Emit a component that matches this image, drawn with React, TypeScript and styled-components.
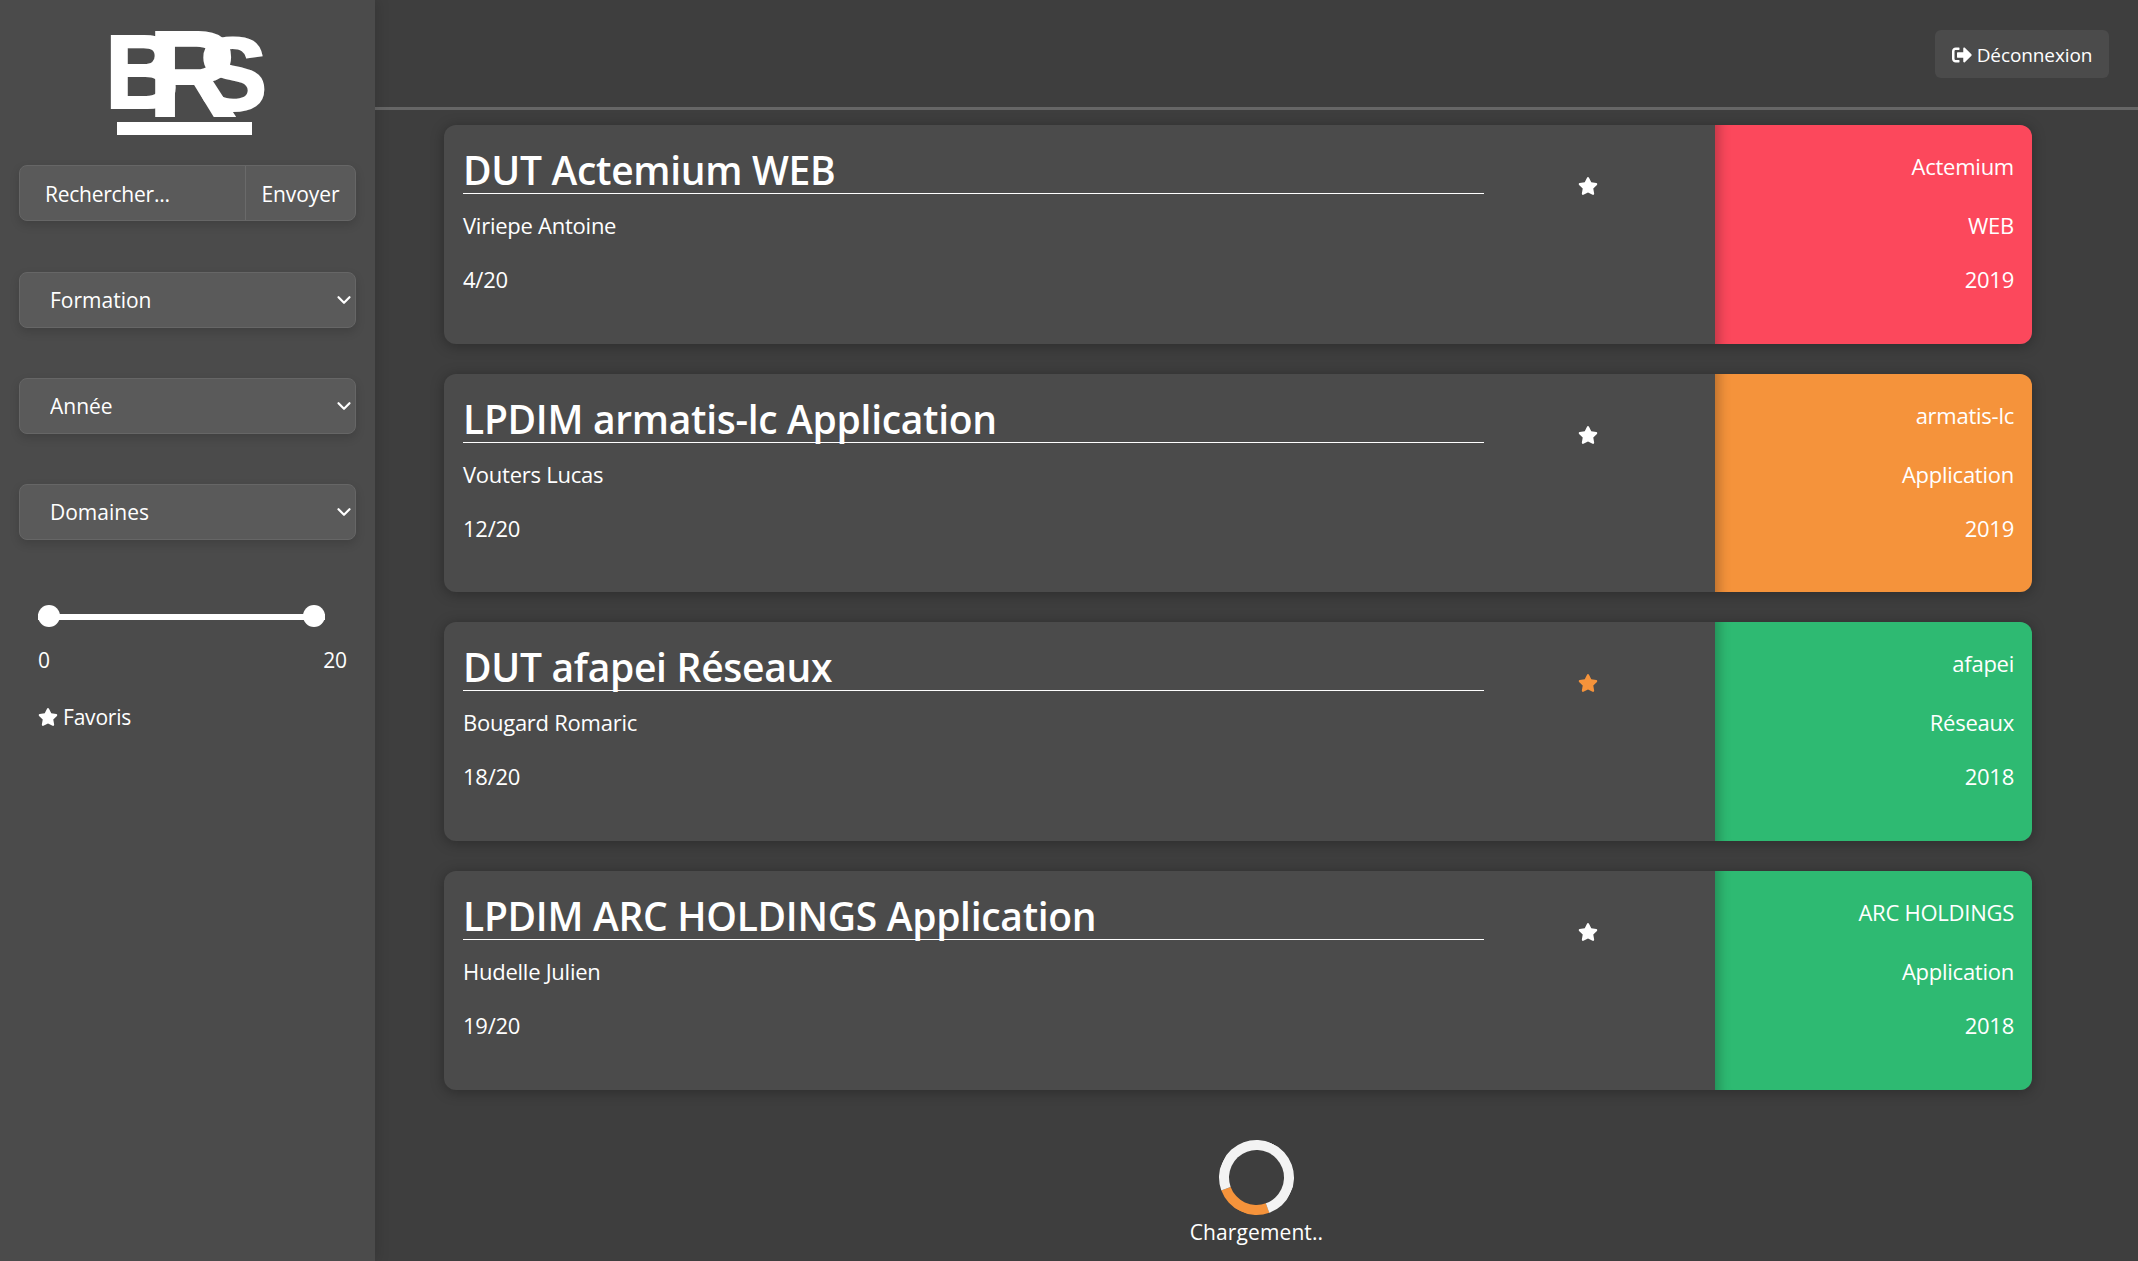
import React from 'react'
import styled, { createGlobalStyle } from 'styled-components'
import { FaStar, FaSignOutAlt } from 'react-icons/fa'
import { FiChevronDown } from 'react-icons/fi'

const GlobalStyle = createGlobalStyle`
  html, body {
    margin: 0;
    padding: 0;
    height: 100%;
    background: #3e3e3e;
    color: #fff;
    font-family: "Open Sans", "Noto Sans", "Liberation Sans", sans-serif;
    overflow: hidden;
  }
  * { box-sizing: border-box; }
`

const Page = styled.div`
  display: flex;
  height: 100vh;
  overflow: hidden;
`

const Sidebar = styled.aside`
  width: 375px;
  flex: none;
  background: #4b4b4b;
  box-shadow: 3px 0 12px rgba(0, 0, 0, 0.12);
  padding: 30px 19px 0;
  display: flex;
  flex-direction: column;
  z-index: 1;
`

const LogoSvg = styled.svg`
  display: block;
  align-self: center;
  flex: none;
  margin: -10px 0;
`

const SearchGroup = styled.div`
  display: flex;
  height: 56px;
  margin-top: 30px;
  border: 1px solid #666;
  border-radius: 8px;
  background: #5a5a5a;
  box-shadow: 0 4px 10px rgba(0, 0, 0, 0.15);
  overflow: hidden;
`

const SearchInput = styled.input`
  width: 225px;
  border: 0;
  outline: 0;
  padding: 2px 0 0 25px;
  background: transparent;
  color: #fff;
  font: 400 21px "Open Sans", sans-serif;
  letter-spacing: -0.25px;
  &::placeholder { color: #fff; opacity: 1; }
`

const SearchButton = styled.button`
  flex: 1;
  border: 0;
  border-left: 1px solid #6a6a6a;
  padding: 2px 0 0;
  background: transparent;
  color: #fff;
  font: 400 21px "Open Sans", sans-serif;
  letter-spacing: -0.05px;
`

const SelectWrap = styled.div<{ $top: number }>`
  position: relative;
  height: 56px;
  margin-top: ${(p) => p.$top}px;
  border: 1px solid #666;
  border-radius: 8px;
  background: #5a5a5a;
  box-shadow: 0 4px 10px rgba(0, 0, 0, 0.15);
`

const Select = styled.select`
  width: 100%;
  height: 100%;
  border: 0;
  outline: 0;
  appearance: none;
  background: transparent;
  padding: 0 0 0 30px;
  color: #fff;
  font: 400 21px "Open Sans", sans-serif;
  letter-spacing: 0;
`

const Chevron = styled(FiChevronDown)`
  position: absolute;
  right: 0;
  top: 16px;
  width: 22px;
  height: 22px;
  stroke-width: 2.4;
  pointer-events: none;
`

const Slider = styled.div`
  position: relative;
  width: 287px;
  height: 6px;
  margin: 74px 0 0 19px;
  background: #fff;
`

const Handle = styled.span<{ $side: 'left' | 'right' }>`
  position: absolute;
  top: -9px;
  ${(p) => p.$side}: 0;
  width: 22px;
  height: 22px;
  border-radius: 50%;
  background: #fff;
`

const SliderLabels = styled.div`
  display: flex;
  justify-content: space-between;
  margin: 25px 9px 0 19px;
  font-size: 21px;
  line-height: 30px;
  letter-spacing: -0.1px;
`

const FavRow = styled.div`
  display: flex;
  align-items: center;
  gap: 5px;
  margin: 27px 0 0 19px;
  font-size: 21px;
  line-height: 30px;
  letter-spacing: -0.2px;
`

const Main = styled.main`
  flex: 1;
  min-width: 0;
  display: flex;
  flex-direction: column;
`

const Header = styled.header`
  height: 110px;
  flex: none;
  display: flex;
  justify-content: flex-end;
  padding: 30px 29px 0 0;
  border-bottom: 3px solid #666;
`

const LogoutButton = styled.button`
  width: 174px;
  height: 48px;
  border: 0;
  border-radius: 6px;
  background: #4b4b4b;
  color: #fff;
  display: flex;
  align-items: center;
  justify-content: center;
  gap: 5px;
  padding: 1px 0 0;
  font: 400 19px "Open Sans", sans-serif;
  letter-spacing: -0.1px;
`

const CardList = styled.section`
  display: flex;
  flex-direction: column;
  gap: 30px;
  padding: 15px 106px 0 69px;
`

const Card = styled.article`
  display: flex;
  height: 218.67px;
  border-radius: 12px;
  background: #4b4b4b;
  box-shadow: 0 2px 14px rgba(0, 0, 0, 0.3);
  overflow: hidden;
`

const CardBody = styled.div`
  width: 1040px;
  flex: none;
  padding: 17px 0 0 19px;
`

const Title = styled.h2`
  margin: 0;
  height: 52px;
  padding-top: 5px;
  border-bottom: 1px solid #fff;
  font-size: 39px;
  font-weight: 600;
  line-height: 46px;
  letter-spacing: -0.3px;
`

const Line = styled.p<{ $top: number }>`
  margin: ${(p) => p.$top}px 0 0;
  font-size: 22px;
  line-height: 30px;
  letter-spacing: -0.25px;
`

const StarCell = styled.div<{ $active?: boolean }>`
  flex: 1;
  display: flex;
  justify-content: center;
  padding: 51px 24px 0 0;
  color: ${(p) => (p.$active ? '#f5933b' : '#fff')};
  font-size: 20px;
`

const Tag = styled.div<{ $color: string }>`
  width: 317px;
  flex: none;
  padding: 26px 18px 0 0;
  text-align: right;
  background: ${(p) => p.$color};
  box-shadow: inset 16px 0 12px -12px rgba(0, 0, 0, 0.25);
`

const Loader = styled.div`
  display: flex;
  flex-direction: column;
  align-items: center;
  margin-top: 50px;
`

const Spinner = styled.div`
  width: 75px;
  height: 75px;
  border: 10px solid #f3f3f3;
  border-bottom-color: #f5933b;
  border-radius: 50%;
  transform: rotate(25deg);
`

const LoaderText = styled.div`
  margin-top: 2px;
  font-size: 21px;
  line-height: 30px;
  letter-spacing: 0.1px;
`

const cards = [
  { title: 'DUT Actemium WEB', name: 'Viriepe Antoine', score: '4/20', company: 'Actemium', field: 'WEB', year: '2019', color: '#fc485c' },
  { title: 'LPDIM armatis-lc Application', name: 'Vouters Lucas', score: '12/20', company: 'armatis-lc', field: 'Application', year: '2019', color: '#f5933b' },
  { title: 'DUT afapei Réseaux', name: 'Bougard Romaric', score: '18/20', company: 'afapei', field: 'Réseaux', year: '2018', color: '#2eba72', fav: true },
  { title: 'LPDIM ARC HOLDINGS Application', name: 'Hudelle Julien', score: '19/20', company: 'ARC HOLDINGS', field: 'Application', year: '2018', color: '#2eba72' },
]

const Logo = () => (
  <LogoSvg width="174" height="125" viewBox="-10 -10 174 125" fill="#fff" stroke="#fff" strokeWidth="2" fontFamily="'Liberation Sans', sans-serif" fontWeight="700">
    <text x="-6" y="78" fontSize="103">B</text>
    <text x="37" y="86" fontSize="123">R</text>
    <text x="87" y="80" fontSize="104">S</text>
    <rect x="6" y="92" width="135" height="13" stroke="none" />
  </LogoSvg>
)

const App = () => (
  <Page>
    <GlobalStyle />
    <Sidebar>
      <Logo />
      <SearchGroup>
        <SearchInput placeholder="Rechercher..." />
        <SearchButton>Envoyer</SearchButton>
      </SearchGroup>
      <SelectWrap $top={51}>
        <Select><option>Formation</option></Select>
        <Chevron />
      </SelectWrap>
      <SelectWrap $top={50}>
        <Select><option>Année</option></Select>
        <Chevron />
      </SelectWrap>
      <SelectWrap $top={50}>
        <Select><option>Domaines</option></Select>
        <Chevron />
      </SelectWrap>
      <Slider>
        <Handle $side="left" />
        <Handle $side="right" />
      </Slider>
      <SliderLabels>
        <span>0</span>
        <span>20</span>
      </SliderLabels>
      <FavRow>
        <FaStar size={20} />
        Favoris
      </FavRow>
    </Sidebar>
    <Main>
      <Header>
        <LogoutButton>
          <FaSignOutAlt size={20} />
          Déconnexion
        </LogoutButton>
      </Header>
      <CardList>
        {cards.map((c) => (
          <Card key={c.title}>
            <CardBody>
              <Title>{c.title}</Title>
              <Line $top={16}>{c.name}</Line>
              <Line $top={24}>{c.score}</Line>
            </CardBody>
            <StarCell $active={c.fav}>
              <FaStar />
            </StarCell>
            <Tag $color={c.color}>
              <Line $top={0}>{c.company}</Line>
              <Line $top={29}>{c.field}</Line>
              <Line $top={24}>{c.year}</Line>
            </Tag>
          </Card>
        ))}
      </CardList>
      <Loader>
        <Spinner />
        <LoaderText>Chargement..</LoaderText>
      </Loader>
    </Main>
  </Page>
)

export default App
